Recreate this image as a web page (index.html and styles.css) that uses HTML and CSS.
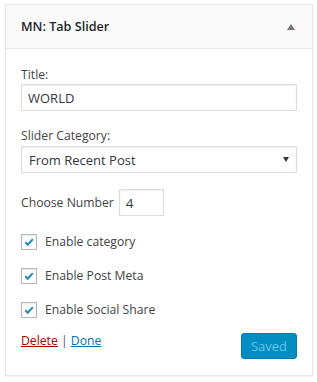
FILE: index.html
```html
<!DOCTYPE html>
<html lang="en">
<head>
    <meta charset="UTF-8">
    <meta name="viewport" content="width=device-width, initial-scale=1.0">
    <title>MN: Tab Slider</title>
    <link rel="stylesheet" href="styles.css">
</head>
<body>
    <div class="widget">
        <div class="widget-top">
            <h3>MN: Tab Slider</h3>
            <span class="toggle"></span>
        </div>
        <div class="widget-inside">
            <div class="field">
                <label for="title">Title:</label>
                <input type="text" id="title" class="wide" value="WORLD">
            </div>

            <div class="field">
                <label for="category">Slider Category:</label>
                <div class="select-wrap">
                    <select id="category" class="wide">
                        <option>From Recent Post</option>
                    </select>
                </div>
            </div>

            <div class="field inline">
                <label for="number">Choose Number</label>
                <input type="text" id="number" class="small" value="4">
            </div>

            <div class="check">
                <span class="box"><svg viewBox="0 0 16 16"><path d="M3.8 8.3l2.8 2.8 5.8-6.4" /></svg></span>
                <span>Enable category</span>
            </div>
            <div class="check">
                <span class="box"><svg viewBox="0 0 16 16"><path d="M3.8 8.3l2.8 2.8 5.8-6.4" /></svg></span>
                <span>Enable Post Meta</span>
            </div>
            <div class="check">
                <span class="box"><svg viewBox="0 0 16 16"><path d="M3.8 8.3l2.8 2.8 5.8-6.4" /></svg></span>
                <span>Enable Social Share</span>
            </div>

            <div class="actions">
                <div class="links">
                    <a href="#" class="delete">Delete</a> | <a href="#" class="done">Done</a>
                </div>
                <button type="button" disabled>Saved</button>
            </div>
        </div>
    </div>
</body>
</html>
```

FILE: styles.css
```css
body {
    margin: 0;
    padding: 4px 4px 5px 5px;
    background: #fff;
    font-family: "Open Sans", sans-serif;
    font-size: 12.2px;
    line-height: 18px;
    color: #444;
}
.widget {
    border: 1px solid #e5e5e5;
    box-shadow: 0 1px 1px rgba(0, 0, 0, 0.04);
}
.widget-top {
    height: 43px;
    background: #fafafa;
    border-bottom: 1px solid #e5e5e5;
    display: flex;
    align-items: center;
    justify-content: space-between;
    padding: 0 17px 0 15px;
}
.widget-top h3 {
    margin: 0;
    font-size: 12.6px;
    font-weight: 600;
    color: #23282d;
}
.toggle {
    width: 0;
    height: 0;
    border-left: 4px solid transparent;
    border-right: 4px solid transparent;
    border-bottom: 6px solid #72777c;
}
.widget-inside {
    padding: 17px 15px 16px 15px;
}
.field {
    margin-bottom: 16px;
}
.field label {
    display: block;
    margin-bottom: 0;
}
input, select {
    font-family: inherit;
    font-size: 13px;
    color: #32373c;
    border: 1px solid #ddd;
    box-shadow: inset 0 1px 2px rgba(0, 0, 0, 0.07);
    background: #fff;
    box-sizing: border-box;
    height: 27px;
    padding: 2px 6px;
    margin: 0;
    outline: none;
    border-radius: 0;
}
.wide {
    width: 100%;
}
.select-wrap {
    position: relative;
    padding-top: 1px;
}
select {
    appearance: none;
    -webkit-appearance: none;
    padding: 2px 7px;
}
.select-wrap::after {
    content: "";
    position: absolute;
    right: 8px;
    top: 12px;
    border-left: 3px solid transparent;
    border-right: 3px solid transparent;
    border-top: 5px solid #32373c;
}
.field.inline {
    display: flex;
    align-items: center;
    gap: 5px;
    margin-top: 15px;
    margin-bottom: 18px;
}
.field.inline label {
    display: inline;
}
.small {
    width: 45px;
    font-size: 13.5px;
}
.check {
    display: flex;
    align-items: center;
    gap: 8px;
    height: 16px;
    margin-top: 18px;
}
.field + .check {
    margin-top: 0;
}
.box {
    width: 16px;
    height: 16px;
    box-sizing: border-box;
    border: 1px solid #b4b9be;
    box-shadow: inset 0 1px 2px rgba(0, 0, 0, 0.1);
    display: flex;
}
.box svg {
    width: 14px;
    height: 14px;
    fill: none;
    stroke: #1e8cbe;
    stroke-width: 2.3;
}
.actions {
    display: flex;
    justify-content: space-between;
    align-items: flex-start;
    margin-top: 14px;
}
.links {
    color: #555;
}
.delete {
    color: #a00;
}
.done {
    color: #0073aa;
}
button {
    font-family: inherit;
    font-size: 13px;
    height: 26px;
    width: 56px;
    padding: 0;
    border: 1px solid #007cb2;
    border-radius: 3px;
    background: #008ec2;
    color: #66c6e4;
    margin-top: 1px;
}
```
